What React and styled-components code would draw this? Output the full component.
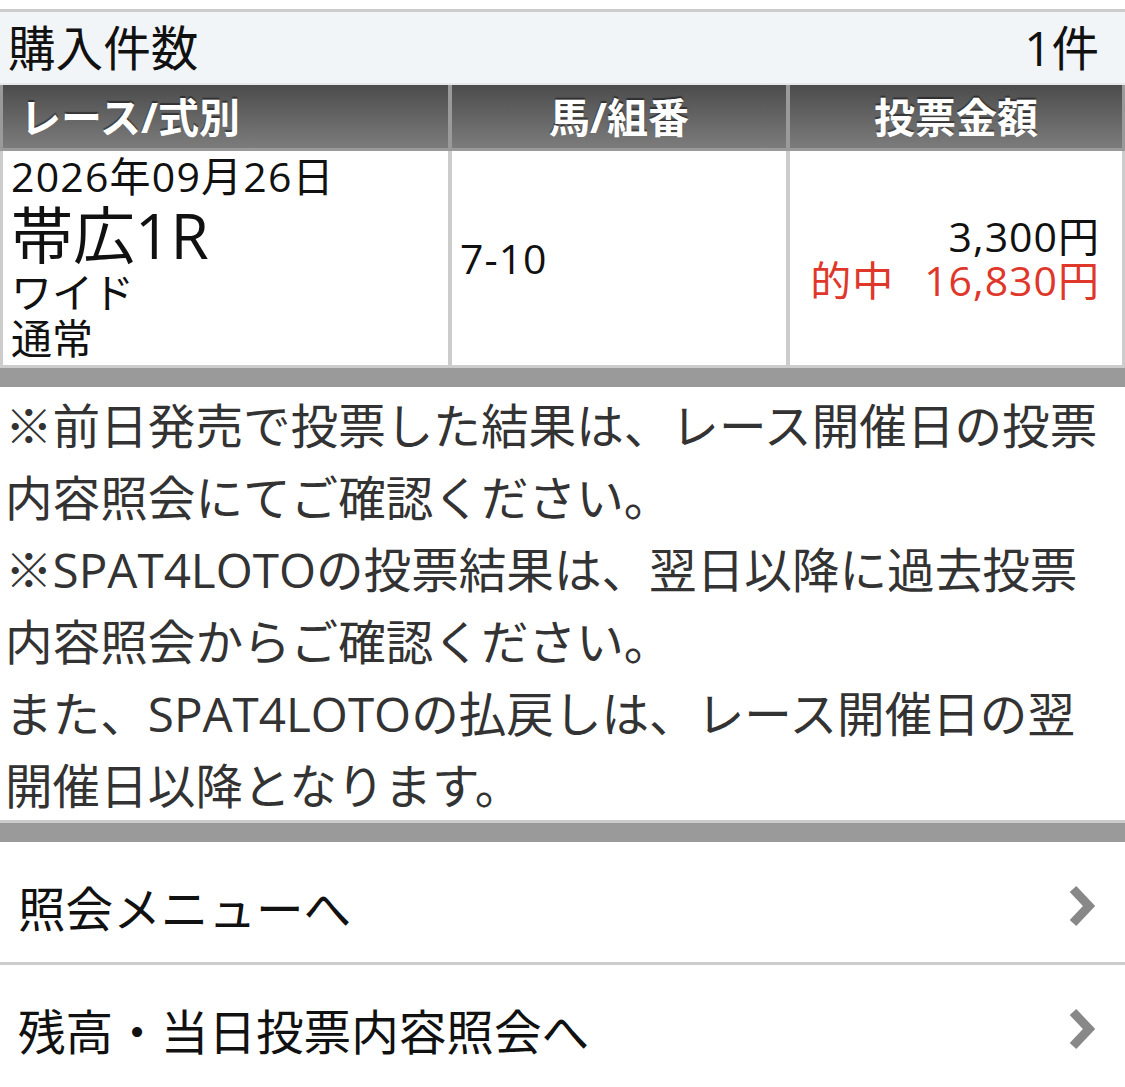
import styled, { createGlobalStyle } from "styled-components";

const GlobalStyle = createGlobalStyle`
    body {
        margin: 0;
        background: #ffffff;
        font-family: "Open Sans", "Noto Sans CJK JP", "Noto Sans", sans-serif;
        color: #111111;
    }
`;

const Page = styled.div`
    width: 1125px;
    padding-top: 9px;
    background: #ffffff;
`;

const CountBar = styled.div`
    display: flex;
    justify-content: space-between;
    align-items: center;
    height: 66px;
    padding: 0 26px 5px 8px;
    border-top: 3px solid #cccccc;
    border-bottom: 2px solid #e6e8ea;
    background-color: #f1f5f7;
    font-size: 47.6px;
    color: #111111;
`;

const HeaderRow = styled.div`
    display: grid;
    grid-template-columns: 445px 334px 1fr;
    column-gap: 4px;
    height: 63px;
    padding: 0 3px 3px 3px;
    background-color: #9a9a9a;
`;

const HeaderCell = styled.div`
    display: flex;
    align-items: center;
    justify-content: ${(props) => (props.left ? "flex-start" : "center")};
    padding-left: ${(props) => (props.left ? "17px" : "0")};
    padding-bottom: 3px;
    background: linear-gradient(#4c4c4c, #7c7c7c);
    color: #ffffff;
    font-size: 41px;
    font-weight: bold;
    text-shadow: 0 -2px 1px rgba(0, 0, 0, 0.45);
`;

const BodyRow = styled.div`
    display: grid;
    grid-template-columns: 445px 334px 1fr;
    column-gap: 4px;
    height: 214px;
    padding: 0 3px 3px 3px;
    background-color: #cccccc;
`;

const Cell = styled.div`
    display: flex;
    flex-direction: column;
    justify-content: ${(props) => (props.top ? "flex-start" : "center")};
    align-items: ${(props) => (props.right ? "flex-end" : "flex-start")};
    padding: ${(props) =>
        props.top ? "0 0 0 8px" : props.right ? "0 22px 0 0" : "0 0 0 8px"};
    background-color: #ffffff;
    font-size: 41px;
`;

const Line = styled.div`
    font-size: ${(props) => props.size || 41}px;
    line-height: ${(props) => props.height || 46}px;
    letter-spacing: ${(props) => props.spacing || 0}px;
    color: ${(props) => (props.hit ? "#e0372b" : "#111111")};
    white-space: pre;
`;

const HitLabel = styled.span`
    margin-right: 30px;
`;

const Separator = styled.div`
    height: 19px;
    border-top: ${(props) => (props.lined ? "3px solid #cccccc" : "none")};
    background-color: #9a9a9a;
`;

const Notes = styled.div`
    padding: 3px 5px 0 5px;
    height: 430px;
    font-size: 47.6px;
    line-height: 72px;
    color: #333333;
    white-space: nowrap;
`;

const MenuItem = styled.div`
    display: flex;
    justify-content: space-between;
    align-items: center;
    height: 112px;
    padding: 8px 28px 0 18px;
    border-bottom: ${(props) => (props.last ? "none" : "3px solid #cccccc")};
    font-size: 47.6px;
    color: #111111;
`;

const Chevron = () => (
    <svg width="30" height="44" viewBox="0 0 30 44">
        <polyline
            points="6,5 22,22 6,39"
            fill="none"
            stroke="#888888"
            strokeWidth="9"
        />
    </svg>
);

export default function App() {
    return (
        <Page>
            <GlobalStyle />
            <CountBar>
                <span>購入件数</span>
                <span>1件</span>
            </CountBar>
            <HeaderRow>
                <HeaderCell left>レース/式別</HeaderCell>
                <HeaderCell>馬/組番</HeaderCell>
                <HeaderCell>投票金額</HeaderCell>
            </HeaderRow>
            <BodyRow>
                <Cell top>
                    <Line height={50} spacing={1.2}>
                        2026年09月26日
                    </Line>
                    <Line size={62} height={68}>
                        帯広1R
                    </Line>
                    <Line>ワイド</Line>
                    <Line>通常</Line>
                </Cell>
                <Cell>
                    <Line spacing={1}>7-10</Line>
                </Cell>
                <Cell right>
                    <Line height={44} spacing={1}>
                        3,300円
                    </Line>
                    <Line height={44} spacing={1} hit>
                        <HitLabel>的中</HitLabel>16,830円
                    </Line>
                </Cell>
            </BodyRow>
            <Separator />
            <Notes>
                ※前日発売で投票した結果は、レース開催日の投票
                <br />
                内容照会にてご確認ください。
                <br />
                ※SPAT4LOTOの投票結果は、翌日以降に過去投票
                <br />
                内容照会からご確認ください。
                <br />
                また、SPAT4LOTOの払戻しは、レース開催日の翌
                <br />
                開催日以降となります。
            </Notes>
            <Separator lined />
            <MenuItem>
                <span>照会メニューへ</span>
                <Chevron />
            </MenuItem>
            <MenuItem last>
                <span>残高・当日投票内容照会へ</span>
                <Chevron />
            </MenuItem>
        </Page>
    );
}
